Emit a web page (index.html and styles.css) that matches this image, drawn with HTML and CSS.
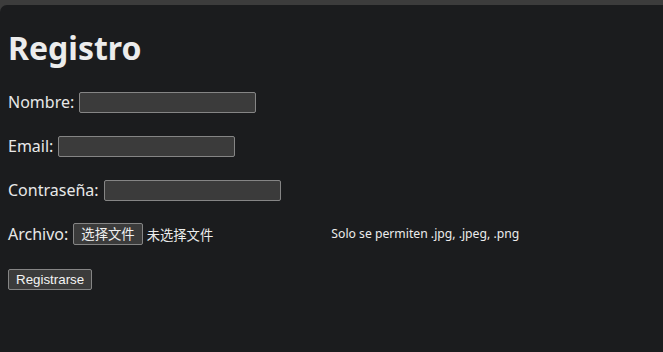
FILE: index.html
```html
<!DOCTYPE html>
<html lang="es">
<head>
<meta charset="utf-8">
<title>Registro</title>
<link rel="stylesheet" href="styles.css">
</head>
<body>
<div class="frame-top"></div>
<main class="page">
  <h1 class="title">Registro</h1>
  <form class="form">
    <div class="row">
      <label class="label" for="nombre">Nombre:</label>
      <input class="field" id="nombre" type="text">
    </div>
    <div class="row">
      <label class="label" for="email">Email:</label>
      <input class="field" id="email" type="email">
    </div>
    <div class="row">
      <label class="label" for="pass">Contraseña:</label>
      <input class="field" id="pass" type="password">
    </div>
    <div class="row">
      <span class="label">Archivo:</span>
      <span class="file">
        <button type="button" class="file-btn">选择文件</button>
        <span class="file-name">未选择文件</span>
      </span>
      <span class="hint">Solo se permiten .jpg, .jpeg, .png</span>
    </div>
    <div class="row submit-row">
      <button type="submit" class="submit">Registrarse</button>
    </div>
  </form>
</main>
</body>
</html>
```
FILE: styles.css
```css
html, body {
  margin: 0;
  padding: 0;
  height: 100%;
  background: #3c3c3c;
}
body {
  display: flex;
  flex-direction: column;
  font-family: "Noto Sans", "Open Sans", sans-serif;
  color: #e8e8e8;
}
.frame-top {
  height: 5px;
  flex: none;
  background: #3c3c3c;
}
.page {
  flex: 1;
  background: #1b1c1e;
  border-top-left-radius: 7px;
  padding: 23px 8px 0 8px;
}
.title {
  margin: 0;
  font-size: 32px;
  line-height: 40px;
  font-weight: 700;
  color: #ececec;
}
.form {
  display: flex;
  flex-direction: column;
  gap: 22px;
  margin-top: 23px;
}
.row {
  display: flex;
  align-items: center;
  height: 22px;
  font-size: 16px;
  line-height: 22px;
}
.label {
  margin-right: 5px;
}
.field {
  box-sizing: border-box;
  width: 177px;
  height: 21px;
  margin: 0;
  padding: 1px 2px;
  background: #3b3b3b;
  border: 1px solid #858585;
  border-radius: 2px;
  color: #e8e8e8;
  font: 13px "Liberation Sans", sans-serif;
}
.file {
  display: flex;
  align-items: center;
  width: 254px;
  flex: none;
}
.file-btn {
  box-sizing: border-box;
  height: 22px;
  margin: 0 4px 0 0;
  padding: 0 7px;
  background: #3b3b3b;
  border: 1px solid #858585;
  border-radius: 2px;
  color: #f0f0f0;
  font: 13.33px "Noto Sans CJK SC", sans-serif;
  line-height: 18px;
}
.file-name {
  font: 13.33px "Noto Sans CJK SC", sans-serif;
  color: #ececec;
}
.hint {
  margin-left: 4px;
  font-size: 12.2px;
  color: #ececec;
}
.submit-row {
  margin-top: 1px;
}
.submit {
  box-sizing: border-box;
  height: 21px;
  margin: 0;
  padding: 0 7px;
  background: #3b3b3b;
  border: 1px solid #858585;
  border-radius: 2px;
  color: #f4f4f4;
  font: 13.33px "Liberation Sans", Arial, sans-serif;
}
```
